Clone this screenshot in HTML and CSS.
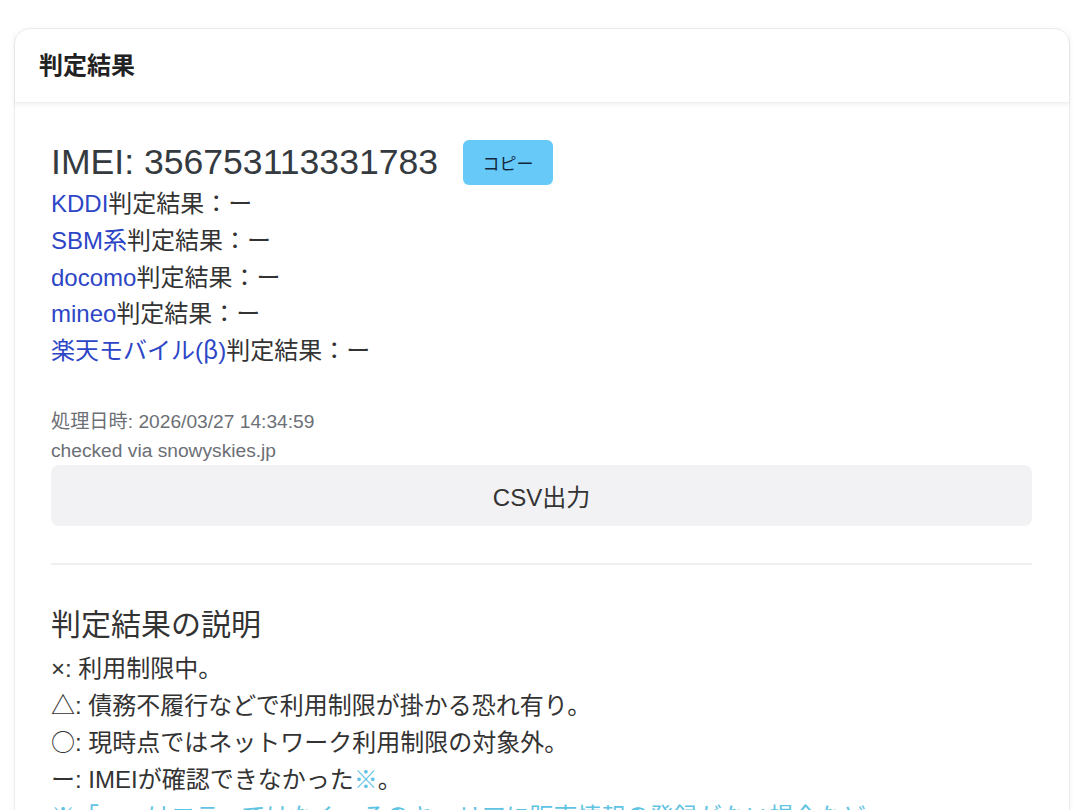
FILE: index.html
```html
<!DOCTYPE html>
<html lang="ja">
<head>
  <meta charset="UTF-8" />
  <meta name="viewport" content="width=device-width, initial-scale=1.0" />
  <title>判定結果</title>
  <link rel="stylesheet" href="styles.css">
</head>
<body>
  <div class="page">
    <div class="card">
      <div class="card-header">判定結果</div>
      <div class="card-body">
        <div class="imei-row">
          <span class="imei">IMEI: 356753113331783</span>
          <button class="btn-copy">コピー</button>
        </div>
        <ul class="results">
          <li><a href="#">KDDI</a>判定結果：ー</li>
          <li><a href="#">SBM系</a>判定結果：ー</li>
          <li><a href="#">docomo</a>判定結果：ー</li>
          <li><a href="#">mineo</a>判定結果：ー</li>
          <li><a href="#">楽天モバイル(<span class="beta">β</span>)</a>判定結果：ー</li>
        </ul>
        <div class="meta">
          <div>処理日時: 2026/03/27 14:34:59</div>
          <div>checked via snowyskies.jp</div>
        </div>
        <button class="btn-csv">CSV出力</button>
        <hr class="divider">
        <h5 class="legend-title">判定結果の説明</h5>
        <div class="legend">
          <p>×: 利用制限中。</p>
          <p><span class="sym">△</span>: 債務不履行などで利用制限が掛かる恐れ有り。</p>
          <p><span class="sym">○</span>: 現時点ではネットワーク利用制限の対象外。</p>
          <p>ー: IMEIが確認できなかった<span class="note-mark">※</span>。</p>
          <p class="note">※「ー」はエラーではなく、そのキャリアに販売情報の登録がない場合など<br>にも表示されます。</p>
        </div>
      </div>
    </div>
  </div>
</body>
</html>
```

FILE: styles.css
```css
* {
  margin: 0;
  padding: 0;
  box-sizing: border-box;
}
body {
  font-family: "Liberation Sans", "Noto Sans CJK JP", sans-serif;
  background: #fff;
  color: #333;
  overflow: hidden;
}
.page {
  padding: 28px 10px 0 14px;
}
.card {
  border: 1px solid #ececec;
  border-radius: 16px;
  background: #fff;
  box-shadow: 0 0 6px rgba(0, 0, 0, 0.04);
}
.card-header {
  padding: 19px 24px 18px;
  font-size: 24px;
  line-height: 36px;
  font-weight: bold;
  color: #222;
  border-bottom: 1px solid #f0f0f0;
  box-shadow: 0 2px 4px rgba(0, 0, 0, 0.06);
}
.card-body {
  padding: 36px 37px 36px 36px;
}
.imei-row {
  display: flex;
  align-items: center;
  height: 47px;
}
.imei {
  font-size: 35.6px;
  color: #343a40;
  line-height: 47px;
}
.btn-copy {
  margin-left: 25px;
  width: 90px;
  height: 45px;
  border: none;
  border-radius: 6px;
  background: #66c9f8;
  color: #13263d;
  font-family: "Noto Sans CJK JP", sans-serif;
  font-size: 17px;
}
.results {
  list-style: none;
  font-size: 24px;
  line-height: 36.75px;
}
.results a {
  color: #2d46c6;
  text-decoration: none;
}
.beta {
  font-family: "Noto Sans CJK JP", sans-serif;
  font-feature-settings: "fwid";
  line-height: 1;
}
.meta {
  margin-top: 37px;
  font-size: 19.2px;
  line-height: 29px;
  color: #6c6f75;
}
.btn-csv {
  display: block;
  width: 100%;
  height: 61px;
  border: none;
  border-radius: 8px;
  background: #f2f2f4;
  color: #333;
  font-family: "Liberation Sans", "Noto Sans CJK JP", sans-serif;
  font-size: 24px;
}
.divider {
  border: none;
  border-top: 2px solid #efefef;
  margin: 37px 0 42px;
}
.legend-title {
  font-size: 30px;
  font-weight: normal;
  line-height: 36px;
  color: #333;
  margin-bottom: 7px;
}
.legend p {
  font-size: 24px;
  line-height: 37px;
}
.sym {
  font-family: "Noto Sans CJK JP", sans-serif;
  line-height: 1;
}
.note-mark,
.legend .note {
  color: #5fc3e4;
}
```
